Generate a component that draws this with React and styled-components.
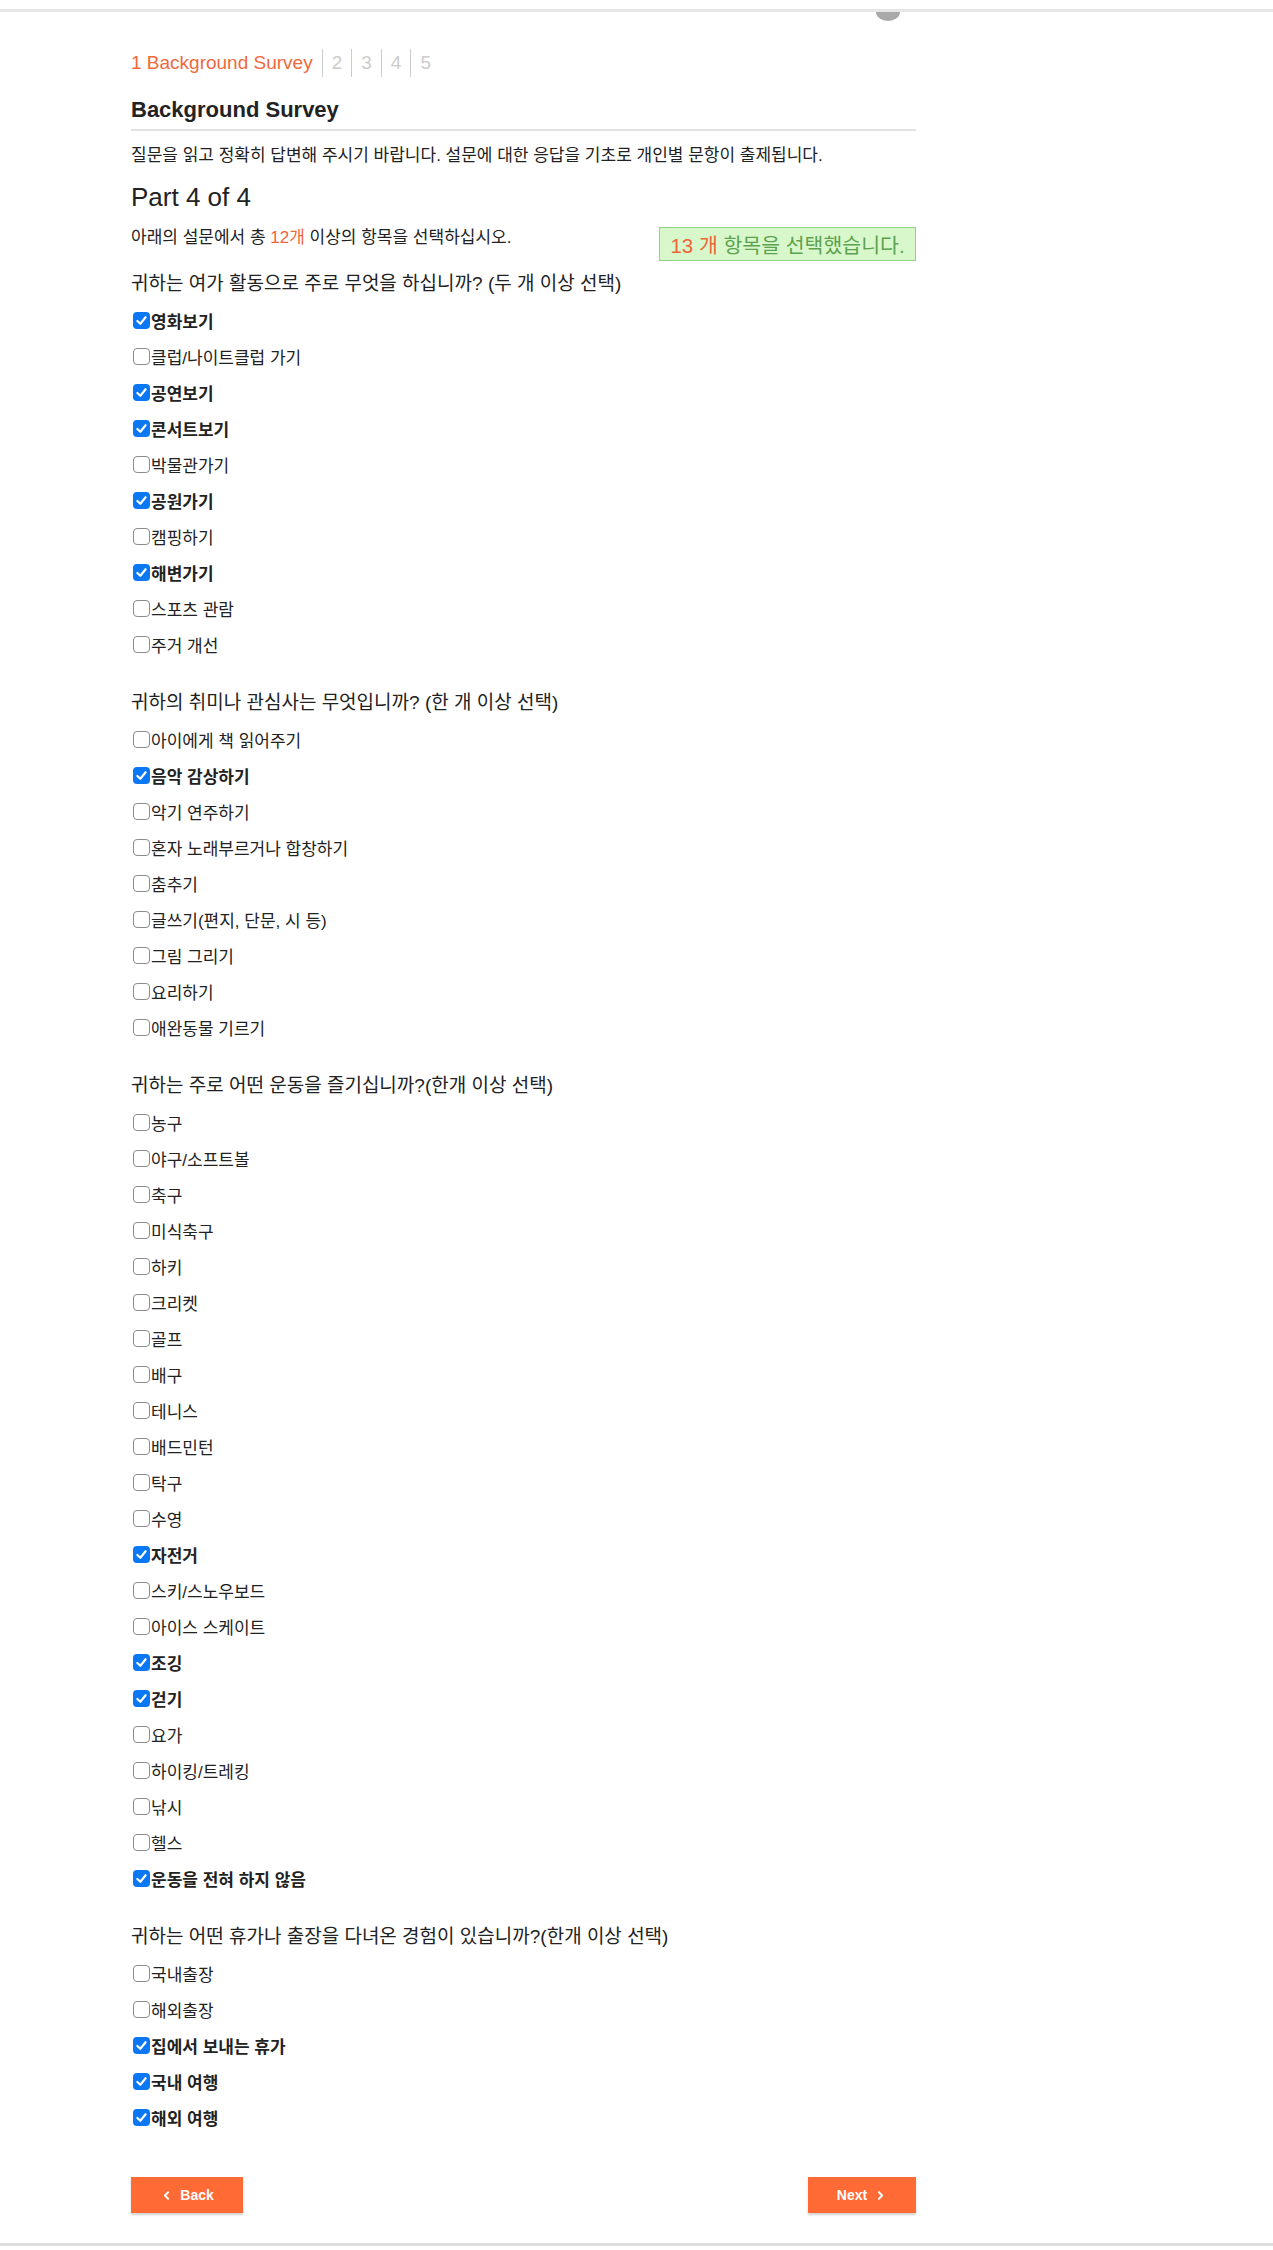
import React, { useState } from 'react';
import styled, { createGlobalStyle } from 'styled-components';
import { ChevronLeft, ChevronRight } from 'lucide-react';

const GlobalStyle = createGlobalStyle`
  body {
    margin: 0;
    background: #ffffff;
    font-family: "Liberation Sans", Arial, "Noto Sans CJK KR", sans-serif;
    color: #222222;
  }
`;

const questions = [
  {
    title: '귀하는 여가 활동으로 주로 무엇을 하십니까? (두 개 이상 선택)',
    items: [
      ['영화보기', true],
      ['클럽/나이트클럽 가기', false],
      ['공연보기', true],
      ['콘서트보기', true],
      ['박물관가기', false],
      ['공원가기', true],
      ['캠핑하기', false],
      ['해변가기', true],
      ['스포츠 관람', false],
      ['주거 개선', false],
    ],
  },
  {
    title: '귀하의 취미나 관심사는 무엇입니까? (한 개 이상 선택)',
    items: [
      ['아이에게 책 읽어주기', false],
      ['음악 감상하기', true],
      ['악기 연주하기', false],
      ['혼자 노래부르거나 합창하기', false],
      ['춤추기', false],
      ['글쓰기(편지, 단문, 시 등)', false],
      ['그림 그리기', false],
      ['요리하기', false],
      ['애완동물 기르기', false],
    ],
  },
  {
    title: '귀하는 주로 어떤 운동을 즐기십니까?(한개 이상 선택)',
    items: [
      ['농구', false],
      ['야구/소프트볼', false],
      ['축구', false],
      ['미식축구', false],
      ['하키', false],
      ['크리켓', false],
      ['골프', false],
      ['배구', false],
      ['테니스', false],
      ['배드민턴', false],
      ['탁구', false],
      ['수영', false],
      ['자전거', true],
      ['스키/스노우보드', false],
      ['아이스 스케이트', false],
      ['조깅', true],
      ['걷기', true],
      ['요가', false],
      ['하이킹/트레킹', false],
      ['낚시', false],
      ['헬스', false],
      ['운동을 전혀 하지 않음', true],
    ],
  },
  {
    title: '귀하는 어떤 휴가나 출장을 다녀온 경험이 있습니까?(한개 이상 선택)',
    items: [
      ['국내출장', false],
      ['해외출장', false],
      ['집에서 보내는 휴가', true],
      ['국내 여행', true],
      ['해외 여행', true],
    ],
  },
];

// Thin grey rule at the very top, with the grey knob peeking out below it
const TopBar = styled.div`
  position: relative;
  margin-top: 9px;
  height: 3px;
  background: #e6e6e6;
`;

const Knob = styled.span`
  position: absolute;
  left: 876px;
  top: 3px;
  width: 24px;
  height: 9px;
  border-radius: 0 0 12px 12px / 0 0 9px 9px;
  background: #a9a9a9;
`;

const Main = styled.main`
  width: 785px;
  padding-left: 131px;
`;

const Steps = styled.ol`
  display: flex;
  list-style: none;
  margin: 37px 0 0;
  padding: 0;
`;

const Step = styled.li`
  font-size: 19px;
  line-height: 28px;
  padding: 0 9px;
  color: ${(p) => (p.$active ? '#f0693c' : '#cccccc')};
  border-left: ${(p) => (p.$active ? 'none' : '1px solid #cccccc')};
  &:first-child {
    padding-left: 0;
  }
`;

const Heading = styled.h1`
  margin: 19px 0 0;
  padding-bottom: 5px;
  font-size: 22px;
  line-height: 28px;
  font-weight: 700;
  border-bottom: 2px solid #e2e2e2;
`;

const Intro = styled.p`
  margin: 13px 0 0;
  font-size: 17px;
  line-height: 24px;
`;

const Part = styled.h2`
  margin: 14px 0 0;
  font-size: 26px;
  line-height: 30px;
  font-weight: 400;
`;

const InfoRow = styled.div`
  display: flex;
  justify-content: space-between;
  align-items: flex-start;
  margin-top: 15px;
`;

const Instruction = styled.p`
  margin: 0;
  font-size: 17px;
  line-height: 22px;
`;

const Accent = styled.span`
  color: #f0643a;
`;

const Counter = styled.div`
  box-sizing: border-box;
  width: 257px;
  height: 34px;
  padding: 0 6px;
  display: flex;
  align-items: center;
  justify-content: center;
  background: #d8f8cb;
  border: 1px solid #8fd27f;
  color: #5ca24f;
  font-size: 20.5px;
  white-space: nowrap;
`;

const Section = styled.section`
  margin-top: ${(p) => (p.$first ? '5px' : '23px')};
`;

const Question = styled.h3`
  margin: 0;
  font-size: 19px;
  line-height: 36px;
  font-weight: 400;
`;

const Option = styled.label`
  display: flex;
  align-items: center;
  height: 36px;
  font-size: 17px;
  font-weight: ${(p) => (p.$checked ? 700 : 400)};
  cursor: pointer;
`;

const Box = styled.span`
  box-sizing: border-box;
  width: 17px;
  height: 17px;
  margin: 0 1px 0 2px;
  border-radius: 4px;
  display: inline-flex;
  align-items: center;
  justify-content: center;
  background: ${(p) => (p.$checked ? '#0a78f5' : '#ffffff')};
  border: ${(p) => (p.$checked ? 'none' : '1.5px solid #8c8c8c')};
  flex-shrink: 0;
`;

const HiddenInput = styled.input`
  display: none;
`;

const Nav = styled.div`
  display: flex;
  justify-content: space-between;
  margin-top: 42px;
`;

const NavButton = styled.button`
  width: ${(p) => p.$width}px;
  height: 36px;
  display: flex;
  align-items: center;
  justify-content: center;
  gap: 7px;
  border: none;
  background: #ff6a35;
  color: #ffffff;
  font-family: "Liberation Sans", Arial, sans-serif;
  font-size: 14px;
  font-weight: 700;
  box-shadow: 0 2px 2px rgba(0, 0, 0, 0.18);
  cursor: pointer;
`;

const BottomBar = styled.div`
  margin-top: 30px;
  height: 3px;
  background: #dddddd;
`;

const Check = () => (
  <svg width="13" height="13" viewBox="0 0 12 12">
    <path d="M2.2 6.4 L4.9 9 L9.8 3" fill="none" stroke="#ffffff" strokeWidth="2" strokeLinecap="round" strokeLinejoin="round" />
  </svg>
);

const OptionRow = ({ label, initial }) => {
  const [checked, setChecked] = useState(initial);
  return (
    <Option $checked={checked}>
      <HiddenInput type="checkbox" checked={checked} onChange={() => setChecked(!checked)} />
      <Box $checked={checked}>{checked && <Check />}</Box>
      {label}
    </Option>
  );
};

const App = () => {
  return (
    <>
      <GlobalStyle />
      <TopBar>
        <Knob />
      </TopBar>
      <Main>
        <Steps>
          <Step $active>1 Background Survey</Step>
          <Step>2</Step>
          <Step>3</Step>
          <Step>4</Step>
          <Step>5</Step>
        </Steps>
        <Heading>Background Survey</Heading>
        <Intro>질문을 읽고 정확히 답변해 주시기 바랍니다. 설문에 대한 응답을 기초로 개인별 문항이 출제됩니다.</Intro>
        <Part>Part 4 of 4</Part>
        <InfoRow>
          <Instruction>
            아래의 설문에서 총 <Accent>12개</Accent> 이상의 항목을 선택하십시오.
          </Instruction>
          <Counter>
            <Accent>13 개</Accent>&nbsp;항목을 선택했습니다.
          </Counter>
        </InfoRow>
        {questions.map((q, i) => (
          <Section key={q.title} $first={i === 0}>
            <Question>{q.title}</Question>
            {q.items.map(([label, on]) => (
              <OptionRow key={label} label={label} initial={on} />
            ))}
          </Section>
        ))}
        <Nav>
          <NavButton $width={112}>
            <ChevronLeft size={13} strokeWidth={3.5} />
            Back
          </NavButton>
          <NavButton $width={108}>
            Next
            <ChevronRight size={13} strokeWidth={3.5} />
          </NavButton>
        </Nav>
      </Main>
      <BottomBar />
    </>
  );
};

export default App;
